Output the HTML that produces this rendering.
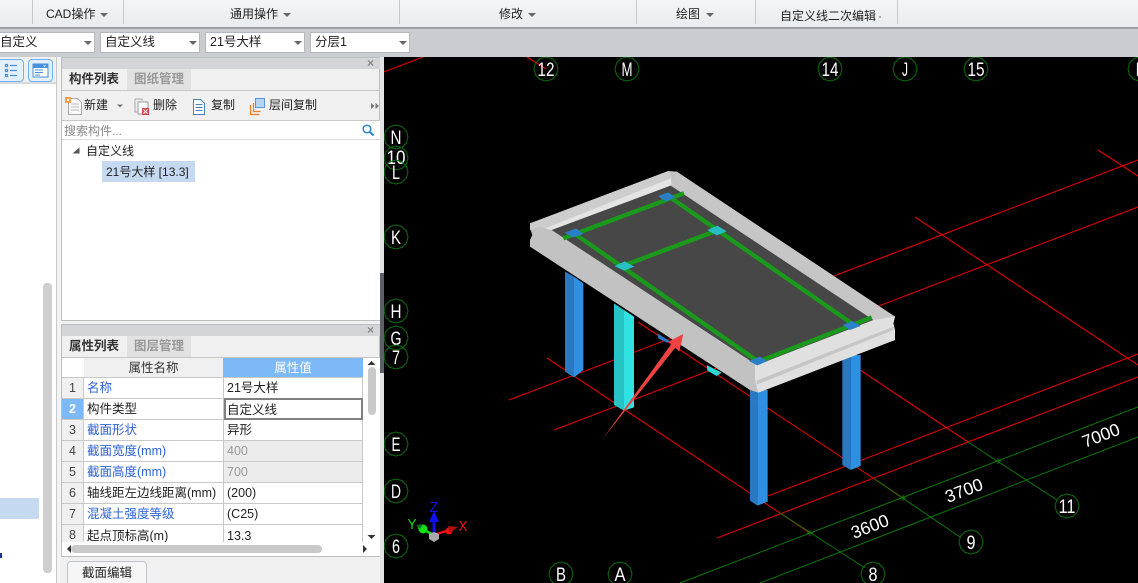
<!DOCTYPE html>
<html><head><meta charset="utf-8">
<style>
html,body{margin:0;padding:0;background:#eef0f1}
#p{position:relative;width:1138px;height:583px;overflow:hidden;background:#f0f0f0;font-family:"Liberation Sans","Noto Sans CJK SC",sans-serif;font-size:12px;color:#222}
#p div{position:absolute;box-sizing:border-box;white-space:nowrap}
.t{line-height:20px;height:20px}
.sep{top:0;width:1px;height:24px;background:#c4c8ca}
.cb{top:32px;height:21px;background:#fff;border:1px solid #b5b8bc;line-height:19px;padding-left:4px;font-size:12.5px}
.ar{width:0;height:0;border-left:4px solid transparent;border-right:4px solid transparent;border-top:4px solid #666}
.tab{font-size:12.5px;line-height:21px;text-align:center}
.c{font-size:12.5px;line-height:20px;height:20px;padding-left:3px}
.n{color:#444;text-align:center;padding:0;background:#f0f0f0;width:21px;left:62px;font-size:12.5px;line-height:20px;height:20px}
.bl{color:#2d62d6}
svg text{font-family:"Liberation Sans",sans-serif}
</style></head><body>
<div id="p">
<!-- top bar -->
<div style="left:0;top:0;width:1138px;height:27px;background:linear-gradient(#f3f5f6,#e9ecee)"></div>
<div style="left:0;top:27px;width:1138px;height:2px;background:#9b9ea2"></div>
<div style="left:0;top:29px;width:1138px;height:28px;background:#c9ccd1"></div>
<div class="sep" style="left:32px"></div><div class="sep" style="left:123px"></div><div class="sep" style="left:399px"></div><div class="sep" style="left:636px"></div><div class="sep" style="left:755px"></div><div class="sep" style="left:897px"></div>
<div class="t" style="left:46px;top:4px">CAD操作</div><div class="ar" style="left:100px;top:13px"></div>
<div class="t" style="left:230px;top:4px">通用操作</div><div class="ar" style="left:283px;top:13px"></div>
<div class="t" style="left:499px;top:4px">修改</div><div class="ar" style="left:528px;top:13px"></div>
<div class="t" style="left:676px;top:4px">绘图</div><div class="ar" style="left:706px;top:13px"></div>
<div class="t" style="left:780px;top:6px;font-size:12px">自定义线二次编辑</div><div style="left:879px;top:16px;width:2px;height:2px;background:#aaa"></div>
<!-- combos -->
<div class="cb" style="left:-5px;width:100px">自定义</div><div class="ar" style="left:84px;top:41px"></div>
<div class="cb" style="left:100px;width:100px">自定义线</div><div class="ar" style="left:189px;top:41px"></div>
<div class="cb" style="left:205px;width:100px">21号大样</div><div class="ar" style="left:294px;top:41px"></div>
<div class="cb" style="left:310px;width:100px">分层1</div><div class="ar" style="left:399px;top:41px"></div>
<!-- left narrow panel -->
<div style="left:0;top:57px;width:57px;height:526px;background:#fff"></div>
<div style="left:0;top:57px;width:57px;height:27px;background:#f0f0f0;border-bottom:2px solid #d8dadc"></div>
<div style="left:-3px;top:59px;width:27px;height:23px;background:#e3effb;border:1.5px solid #6fb1f2;border-radius:4px"></div>
<svg style="position:absolute;left:0;top:59px" width="56" height="24"><g fill="none" stroke="#4a90d9" stroke-width="1.2"><rect x="5.5" y="5.5" width="2" height="2"/><rect x="5.5" y="10.5" width="2" height="2"/><rect x="5.5" y="15.500" width="2" height="2"/><path d="M10 6.500h7M10 11.500h7M10 16.500h7"/></g></svg>
<div style="left:28px;top:59px;width:25px;height:23px;background:#e3effb;border:1.5px solid #6fb1f2;border-radius:4px"></div>
<svg style="position:absolute;left:28px;top:59px" width="25" height="23"><rect x="5" y="5" width="15" height="13" fill="#fff" stroke="#4a90d9"/><rect x="5" y="5" width="15" height="4" fill="#4a90d9"/><path d="M7 11h8M7 13.500h8M7 16h5" stroke="#4a90d9"/><path d="M15 6.500h3l-1.500 1.500z" fill="#fff"/></svg>
<div style="left:0;top:498px;width:39px;height:21px;background:#c5d9f1"></div>
<div style="left:43px;top:283px;width:9px;height:290px;background:#cfcfcf;border-radius:4px"></div>
<div style="left:56px;top:57px;width:1px;height:526px;background:#c8c8c8"></div>
<div style="left:0;top:553px;width:2px;height:5px;background:#2030a0"></div>
<!-- upper panel -->
<div style="left:61px;top:57px;width:319px;height:264px;background:#f0f0f0;border:1px solid #bcbfc2"></div>
<div style="left:62px;top:58px;width:318px;height:11px;background:#d3d5d8"></div>
<div style="left:367px;top:56px;font-size:12px;line-height:14px;color:#888;font-weight:bold">×</div>
<div class="tab" style="left:62px;top:69px;width:64px;height:22px;background:#f0f0f0;font-weight:bold;color:#333">构件列表</div>
<div class="tab" style="left:127px;top:69px;width:64px;height:21px;background:#e2e2e2;color:#999;font-weight:bold">图纸管理</div>
<div style="left:62px;top:90px;width:318px;height:1px;background:#c4c6c8"></div>
<div style="left:62px;top:120px;width:318px;height:1px;background:#c8c8c8"></div>
<div style="left:62px;top:121px;width:318px;height:199px;background:#fff"></div>
<div style="left:62px;top:139px;width:318px;height:1px;background:#dcdcdc"></div>
<svg style="position:absolute;left:62px;top:91px" width="318" height="30">
<path d="M6.500 7.500h9l4 4v12h-13z" fill="#fafafa" stroke="#aaa"/><path d="M9 13h8M9 16h8M9 19h8" stroke="#bbb"/><rect x="3" y="6" width="6" height="6" fill="#f6a04a"/><rect x="5" y="8" width="2" height="2" fill="#fff"/>
<path d="M73 8h7v2M73 8v13h4" fill="none" stroke="#aaa"/><rect x="76" y="11" width="10" height="12" fill="#fff" stroke="#999"/><rect x="80" y="17" width="7" height="7" fill="#d94a4a"/><path d="M81.500 18.500l4 4M85.500 18.500l-4 4" stroke="#fff"/>
<path d="M131.500 8.500h7l4 4v11h-11z" fill="#fff" stroke="#4a80b8"/><path d="M133.500 13.500h7M133.500 16.500h7M133.500 19.500h7" stroke="#4a80b8"/>
<path d="M188.500 14v9.500h9M191.500 12v8.500h7" fill="none" stroke="#ee7d22" stroke-width="1.200"/><rect x="193.500" y="7.500" width="9" height="9" fill="#b6d4f6" stroke="#5b95d8"/>
<path d="M309 12v6l3.500-3zM313.500 12v6l3.500-3z" fill="#777"/>
<path d="M55 13.500h6l-3 3z" fill="#777"/>
</svg>
<div class="t" style="left:84px;top:95px">新建</div>
<div class="t" style="left:153px;top:95px">删除</div>
<div class="t" style="left:211px;top:95px">复制</div>
<div class="t" style="left:269px;top:95px">层间复制</div>
<div class="t" style="left:64px;top:121px;color:#888">搜索构件...</div>
<svg style="position:absolute;left:361px;top:123px" width="14" height="14"><circle cx="6" cy="6" r="3.800" fill="none" stroke="#2f88c5" stroke-width="1.500"/><path d="M9 9l3.500 3.500" stroke="#2f88c5" stroke-width="2"/></svg>
<svg style="position:absolute;left:70px;top:145px" width="12" height="12"><path d="M2.500 8.500h7v-6z" fill="#555"/></svg>
<div class="t" style="left:86px;top:141px">自定义线</div>
<div style="left:102px;top:161px;width:93px;height:21px;background:#c5d9f1"></div>
<div class="t" style="left:106px;top:162px">21号大样 [13.3]</div>
<!-- lower panel -->
<div style="left:61px;top:324px;width:319px;height:233px;background:#f0f0f0;border:1px solid #bcbfc2"></div>
<div style="left:62px;top:325px;width:318px;height:11px;background:#d3d5d8"></div>
<div style="left:367px;top:323px;font-size:12px;line-height:14px;color:#888;font-weight:bold">×</div>
<div class="tab" style="left:62px;top:336px;width:64px;height:22px;background:#f0f0f0;font-weight:bold;color:#333">属性列表</div>
<div class="tab" style="left:127px;top:336px;width:64px;height:21px;background:#e2e2e2;color:#999;font-weight:bold">图层管理</div>
<div style="left:62px;top:357px;width:318px;height:1px;background:#c4c6c8"></div>
<div style="left:62px;top:358px;width:318px;height:184px;background:#fff"></div>
<div style="left:84px;top:358px;width:139px;height:19px;background:#f0f0f0;text-align:center;line-height:20px;font-size:12.5px;color:#333">属性名称</div>
<div style="left:223px;top:358px;width:140px;height:19px;background:#7db8f7;text-align:center;line-height:20px;font-size:12.500px;color:#fff">属性值</div>
<div style="left:224px;top:440px;width:139px;height:43px;background:#ececec"></div>
<div class="n" style="top:378px">1</div><div class="n" style="top:399px;background:#7db8f7;color:#fff;font-weight:bold">2</div><div class="n" style="top:420px">3</div><div class="n" style="top:441px">4</div><div class="n" style="top:462px">5</div><div class="n" style="top:483px">6</div><div class="n" style="top:504px">7</div><div class="n" style="top:525px;height:17px">8</div>
<svg style="position:absolute;left:62px;top:358px" width="302" height="184"><g stroke="#c8c8c8" fill="none"><path d="M0 19.500h301M0 40.500h301M0 61.500h301M0 82.500h301M0 103.500h301M0 124.500h301M0 145.500h301M0 166.500h301"/><path d="M21.500 19v165M161.500 19v165M300.500 19v165"/></g></svg>
<div style="left:224px;top:398px;width:139px;height:22px;border:2px solid #808080;background:#fff"></div>
<div class="c bl" style="left:84px;top:378px">名称</div><div class="c" style="left:224px;top:378px">21号大样</div>
<div class="c" style="left:84px;top:399px">构件类型</div><div class="c" style="left:224px;top:400px">自定义线</div>
<div class="c bl" style="left:84px;top:420px">截面形状</div><div class="c" style="left:224px;top:420px">异形</div>
<div class="c bl" style="left:84px;top:441px">截面宽度(mm)</div><div class="c" style="left:224px;top:441px;color:#999">400</div>
<div class="c bl" style="left:84px;top:462px">截面高度(mm)</div><div class="c" style="left:224px;top:462px;color:#999">700</div>
<div class="c" style="left:84px;top:483px">轴线距左边线距离(mm)</div><div class="c" style="left:224px;top:483px">(200)</div>
<div class="c bl" style="left:84px;top:504px">混凝土强度等级</div><div class="c" style="left:224px;top:504px">(C25)</div>
<div class="c" style="left:84px;top:526px">起点顶标高(m)</div><div class="c" style="left:224px;top:526px">13.3</div>
<!-- scrollbars -->
<div style="left:363px;top:358px;width:17px;height:184px;background:#fff"></div>
<svg style="position:absolute;left:363px;top:358px" width="17" height="184"><path d="M4.500 7l4-4 4 4zM4.500 177l4 4 4-4z" fill="#333"/></svg>
<div style="left:368px;top:367px;width:8px;height:48px;background:#c9c9c9;border-radius:4px"></div>
<div style="left:62px;top:542px;width:318px;height:14px;background:#fff"></div>
<svg style="position:absolute;left:62px;top:542px" width="318" height="14"><path d="M5 7l4-4v8zM301 3l4 4-4 4z" fill="#333"/></svg>
<div style="left:71px;top:545px;width:251px;height:8px;background:#c9c9c9;border-radius:4px"></div>
<div style="left:67px;top:561px;width:80px;height:26px;background:#f6f6f6;border:1px solid #bfc2c6;border-radius:4px;text-align:center;line-height:22px;font-size:12.500px">截面编辑</div>
<div style="left:57px;top:57px;width:4px;height:526px;background:#f3f3f3"></div>
<div style="left:380px;top:57px;width:4px;height:526px;background:#e4e4e4"></div>
<div style="left:380px;top:273px;width:4px;height:100px;background:#5c6067"></div>
<!-- viewport -->
<svg style="position:absolute;left:384px;top:57px" width="754" height="526" viewBox="384 57 754 526">
<rect x="384" y="57" width="754" height="526" fill="#000"/>
<defs><polygon id="b" points="0,-12 6,-10.400 10.400,-6 12,0 10.400,6 6,10.400 0,12 -6,10.400 -10.400,6 -12,0 -10.400,-6 -6,-10.400" fill="none" stroke="#0a6e0a"/></defs>
<g stroke="#e00000" stroke-width="1.100" fill="none">
<path d="M384 72L423 57M527 57L546 69"/>
<path d="M509 400L1138 160M554 430L1138 207M768 496L1138 354M717 538L1138 377"/>
<path d="M915 217L1138 365M1098 150L1138 176M547 358L810 533M638 322L903 498M860 370L968 442"/>
</g>
<g stroke="#0a7a0a" stroke-width="1" fill="none">
<path d="M680 583L1138 407M760 583L1138 437M780 513L865 568M873 478L960 537M968 442L1057 500"/>
<path d="M807 533h6M810 530v6M900 498h6M903 495v6M995 461h6M998 458v6" />
</g>
<!-- building -->
<g transform="translate(500 160) scale(.33333)">
<path d="M195 335L222 350V652L195 635Z" fill="#2a78c2"/><path d="M222 350L250 370V630L222 652Z" fill="#2e90e2"/>
<path d="M342 430L372 450V752L342 735Z" fill="#26c4c4"/><path d="M372 450L402 470V742L372 752Z" fill="#30e2e2"/>
<path d="M750 690H772V1037L750 1022Z" fill="#2a78c2"/><path d="M772 690H803V1025L772 1037Z" fill="#2e90e2"/>
<path d="M1027 590H1052V930L1027 915Z" fill="#2a78c2"/><path d="M1052 585H1082V918L1052 930Z" fill="#2e90e2"/>
<path d="M472 520L512 545L500 548L475 535Z" fill="#2a78c2"/>
<path d="M620 615L665 638L650 648L622 632Z" fill="#30d6d6"/>
<path d="M90 190L505 33L530 35L1185 470L1180 490L1185 510V540L775 698L750 690L90 260V240L97 225L90 205Z" fill="#c2c2c2"/>
<path d="M90 190L505 33L515 55L135 205L120 200L90 210Z" fill="#cdcdcd"/>
<path d="M135 205L513 55L515 75L155 210Z" fill="#e4e4e4"/>
<path d="M513 75L530 35L1185 470L1120 480Z" fill="#c6c6c6"/>
<path d="M765 615L1120 480L1185 470L1180 490L1185 510V540L775 698L765 660Z" fill="#e0e0e0"/>
<path d="M770 662L1180 500V510L770 674Z" fill="#c6c6c6"/>
<path d="M155 210L512 77L1120 480L770 615Z" fill="#474747"/>
<g stroke="#1a9a1a" stroke-width="13" fill="none"><path d="M190 235L552 100M505 108L1062 495M225 222L775 605M775 605L1115 472M375 315L650 212"/></g>
<path d="M195 218L228 205L250 222L218 232Z" fill="#2a7fc8"/><path d="M474 108L505 97L527 113L497 124Z" fill="#2a7fc8"/>
<path d="M1028 495L1058 483L1082 498L1050 510Z" fill="#2a7fc8"/><path d="M747 603L778 590L803 603L772 616Z" fill="#2a7fc8"/>
<path d="M343 318L374 304L403 320L372 332Z" fill="#26c0c4"/><path d="M622 210L652 197L680 214L650 226Z" fill="#26c0c4"/>
<path d="M550 522L505 545L514 552L307 838L526 563L538 575Z" fill="#f04242"/>
</g>
<!-- bubbles -->
<g fill="#fff" font-size="19" text-anchor="middle" lengthAdjust="spacingAndGlyphs">
<use href="#b" x="546" y="69"/><text x="546" y="76" textLength="17" lengthAdjust="spacingAndGlyphs">12</text>
<use href="#b" x="627" y="69"/><text x="627" y="76" textLength="11" lengthAdjust="spacingAndGlyphs">M</text>
<use href="#b" x="830" y="69"/><text x="830" y="76" textLength="17" lengthAdjust="spacingAndGlyphs">14</text>
<use href="#b" x="905" y="69"/><text x="905" y="76" textLength="6" lengthAdjust="spacingAndGlyphs">J</text>
<use href="#b" x="976" y="69"/><text x="976" y="76" textLength="17" lengthAdjust="spacingAndGlyphs">15</text>
<use href="#b" x="1140" y="69"/><text x="1140" y="76" textLength="8" lengthAdjust="spacingAndGlyphs">H</text>
<use href="#b" x="396" y="137"/><text x="396" y="144" textLength="11" lengthAdjust="spacingAndGlyphs">N</text>
<use href="#b" x="396" y="158"/><text x="396" y="164" textLength="19" lengthAdjust="spacingAndGlyphs">10</text>
<use href="#b" x="396" y="172"/><text x="396" y="179" textLength="8" lengthAdjust="spacingAndGlyphs">L</text>
<use href="#b" x="396" y="237"/><text x="396" y="244" textLength="10" lengthAdjust="spacingAndGlyphs">K</text>
<use href="#b" x="396" y="311"/><text x="396" y="318" textLength="11" lengthAdjust="spacingAndGlyphs">H</text>
<use href="#b" x="396" y="338"/><text x="396" y="345" textLength="11" lengthAdjust="spacingAndGlyphs">G</text>
<use href="#b" x="396" y="357"/><text x="396" y="364" textLength="8" lengthAdjust="spacingAndGlyphs">7</text>
<use href="#b" x="396" y="444"/><text x="396" y="451" textLength="9" lengthAdjust="spacingAndGlyphs">E</text>
<use href="#b" x="396" y="491"/><text x="396" y="498" textLength="10" lengthAdjust="spacingAndGlyphs">D</text>
<use href="#b" x="396" y="546"/><text x="396" y="553" textLength="8" lengthAdjust="spacingAndGlyphs">6</text>
<use href="#b" x="561" y="574"/><text x="561" y="581" textLength="10" lengthAdjust="spacingAndGlyphs">B</text>
<use href="#b" x="620" y="574"/><text x="620" y="581" textLength="11" lengthAdjust="spacingAndGlyphs">A</text>
<use href="#b" x="873" y="574"/><text x="873" y="581" textLength="9" lengthAdjust="spacingAndGlyphs">8</text>
<use href="#b" x="971" y="542"/><text x="971" y="549" textLength="9" lengthAdjust="spacingAndGlyphs">9</text>
<use href="#b" x="1067" y="506"/><text x="1067" y="513" textLength="17" lengthAdjust="spacingAndGlyphs">11</text>
<text transform="translate(872 532) rotate(-21)" font-size="17.500">3600</text>
<text transform="translate(966 496) rotate(-21)" font-size="17.500">3700</text>
<text transform="translate(1103 441) rotate(-21)" font-size="17.500">7000</text>
</g>
<!-- axes -->
<path d="M434 535L418 527" stroke="#10e010" stroke-width="2.500"/><circle cx="423" cy="529" r="4.500" fill="#10e010"/><path d="M416 525l7-1-3 5z" fill="#0a6a2a"/>
<path d="M434 535L452 529" stroke="#f01010" stroke-width="2.500"/><circle cx="449" cy="531" r="3.500" fill="#f01010"/><path d="M448 526l10 1-8 6z" fill="#b01010"/>
<path d="M434 535V518" stroke="#1010f0" stroke-width="3"/><path d="M429 522l5-11 5 11z" fill="#1010f0"/>
<path d="M429 534l5-2 5 2v5l-5 3-5-3z" fill="#aaa"/>
<g font-size="15"><text x="412" y="529" fill="#10e010" text-anchor="middle" textLength="9" lengthAdjust="spacingAndGlyphs">Y</text><text x="434" y="512" fill="#1010f0" text-anchor="middle" textLength="9" lengthAdjust="spacingAndGlyphs">Z</text><text x="463" y="531" fill="#f01010" text-anchor="middle" textLength="9" lengthAdjust="spacingAndGlyphs">X</text></g>
</svg>
</div>
</body></html>
